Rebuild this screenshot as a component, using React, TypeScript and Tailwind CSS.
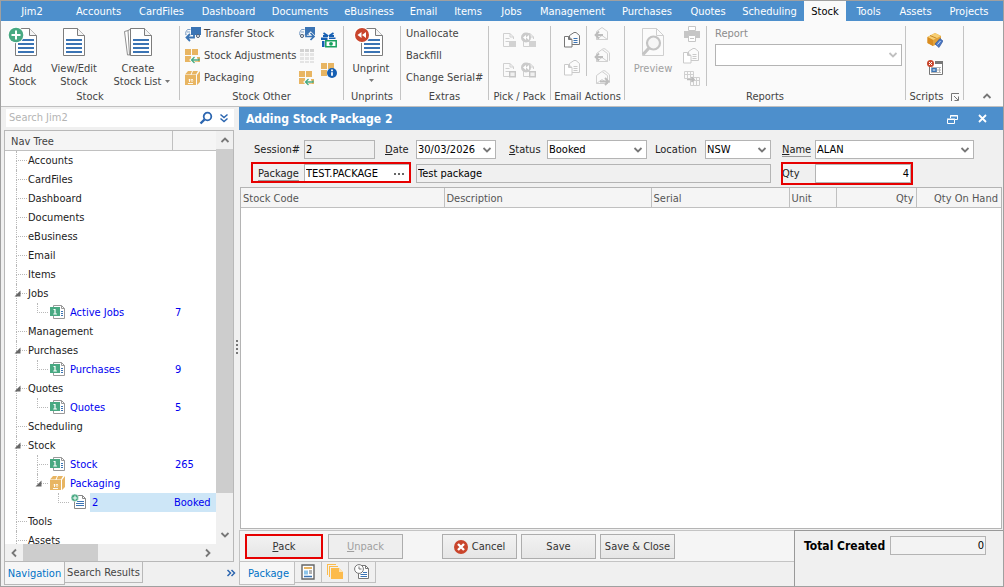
import type { ReactNode } from "react";
import clsx from "clsx";

const MENU = [
  { label: "Jim2", width: "w-[66px] pr-1" },
  { label: "Accounts", width: "w-[63px]" },
  { label: "CardFiles", width: "w-[63px]" },
  { label: "Dashboard", width: "w-[71px]" },
  { label: "Documents", width: "w-[72px]" },
  { label: "eBusiness", width: "w-[66px]" },
  { label: "Email", width: "w-[43px]" },
  { label: "Items", width: "w-[46px]" },
  { label: "Jobs", width: "w-[41px]" },
  { label: "Management", width: "w-[81px]" },
  { label: "Purchases", width: "w-[68px]" },
  { label: "Quotes", width: "w-[54px]" },
  { label: "Scheduling", width: "w-[69px]" },
  { label: "Stock", width: "w-[42px]", active: true },
  { label: "Tools", width: "w-[45px]" },
  { label: "Assets", width: "w-[49px]" },
  { label: "Projects", width: "w-[58px]" },
];

type TreeNode = {
  label: string;
  level: 0 | 1 | 2;
  value?: string;
  icon?: "list" | "box" | "new";
  open?: boolean;
  more?: boolean;
  selected?: boolean;
};

const TREE: TreeNode[] = [
  { label: "Accounts", level: 0 },
  { label: "CardFiles", level: 0 },
  { label: "Dashboard", level: 0 },
  { label: "Documents", level: 0 },
  { label: "eBusiness", level: 0 },
  { label: "Email", level: 0 },
  { label: "Items", level: 0 },
  { label: "Jobs", level: 0, open: true },
  { label: "Active Jobs", level: 1, value: "7", icon: "list" },
  { label: "Management", level: 0 },
  { label: "Purchases", level: 0, open: true },
  { label: "Purchases", level: 1, value: "9", icon: "list" },
  { label: "Quotes", level: 0, open: true },
  { label: "Quotes", level: 1, value: "5", icon: "list" },
  { label: "Scheduling", level: 0 },
  { label: "Stock", level: 0, open: true },
  { label: "Stock", level: 1, value: "265", icon: "list", more: true },
  { label: "Packaging", level: 1, icon: "box", open: true },
  { label: "2", level: 2, value: "Booked", icon: "new", selected: true },
  { label: "Tools", level: 0 },
  { label: "Assets", level: 0 },
];

/* ---------- icons ---------- */

function Chevron({ dir = "down", className }: { dir?: "down" | "up" | "left" | "right"; className?: string }) {
  const d = {
    down: "M1.5 3 5 6.5 8.5 3",
    up: "M1.5 7 5 3.5 8.5 7",
    left: "M7 1.5 3.5 5 7 8.5",
    right: "M3 1.5 6.5 5 3 8.5",
  }[dir];
  return (
    <svg viewBox="0 0 10 10" className={clsx("size-[10px] shrink-0", className)} fill="none" stroke="currentColor" strokeWidth="1.8">
      <path d={d} />
    </svg>
  );
}

function Caret() {
  return (
    <svg viewBox="0 0 5 3" className="h-[3px] w-[5px] shrink-0" fill="#777">
      <path d="M0 0h5L2.500 3z" />
    </svg>
  );
}

function BigDoc({ kind }: { kind: "add" | "plain" | "list" | "unprint" }) {
  const blue = "#3b74b4";
  const view = {
    add: { box: "0 0 30 30", size: "w-[30px]" },
    plain: { box: "6 0 24 30", size: "w-6" },
    list: { box: "0 0 30 30", size: "w-[30px]" },
    unprint: { box: "0 0 34 30", size: "w-[34px]" },
  }[kind];
  return (
    <svg viewBox={view.box} className={clsx("h-[30px]", view.size)} fill="none">
      {kind === "list" && (
        <g stroke="#8f8f8f" fill="#fff">
          <path d="M1.500 4.500 9 2.500v25l-4.500.5z" />
          <path d="M5 3.500 9 1.500v26l-2.500.5z" />
        </g>
      )}
      <path d="M7.500 1.500h14l7 7v20h-21z" fill="#fff" stroke="#7d7d7d" />
      <path d="M21.500 1.500v7h7" fill="#f4f4f4" stroke="#7d7d7d" />
      <path d="M10 13h16M10 17h16M10 21h16M10 25h16" stroke={blue} strokeWidth="2" />
      {kind === "add" && (
        <g>
          <circle cx="8" cy="8" r="8.300" fill="#fff" />
          <circle cx="8" cy="8" r="7.300" fill="#48a982" />
          <path d="M8 3.500v9M3.500 8h9" stroke="#fff" strokeWidth="2" />
        </g>
      )}
      {kind === "unprint" && (
        <g>
          <circle cx="8" cy="8" r="8" fill="#fff" />
          <circle cx="8" cy="8" r="7" fill="#c9452c" />
          <path d="M7.500 5v6L3.500 8zM12 5v6L8 8z" fill="#fff" />
        </g>
      )}
    </svg>
  );
}

function PreviewIcon() {
  return (
    <svg viewBox="0 0 24 30" className="h-[30px] w-[24px]" fill="none">
      <path d="M1.500 1.500h14l7 7v20h-21z" fill="#fbfbfb" stroke="#cfcfcf" />
      <path d="M15.500 1.500v7h7" stroke="#cfcfcf" />
      <circle cx="12.500" cy="16" r="6.500" stroke="#c4c4c4" strokeWidth="2.200" fill="#f6f6f6" />
      <path d="M8 21 2 27.500" stroke="#c4c4c4" strokeWidth="3.200" />
    </svg>
  );
}

function TruckIcon({ dir }: { dir: "in" | "out" }) {
  return (
    <svg viewBox="0 0 16 16" className="size-4 shrink-0" fill="none">
      <path d="M6 1h10v8H6z" fill="#3b74b4" />
      <path d="M5.500 3.500h-3L.8 6v3h4.700M2 6h3" stroke="#7d9fc5" />
      {dir === "in" ? (
        <g>
          <circle cx="13" cy="10" r="1.500" fill="#fff" stroke="#4a5a70" />
          <path d="M1 11.500h8M5 7.500 1 11.500l4 4" stroke="#fafafa" strokeWidth="3" />
          <path d="M1.500 11.500H9V9M5 8 1.500 11.500 5 15" stroke="#3b74b4" strokeWidth="1.800" />
        </g>
      ) : (
        <g>
          <circle cx="3" cy="10" r="1.500" fill="#fff" stroke="#4a5a70" />
          <path d="M7 10.500h7M10.500 6.500l4 4-4 4" stroke="#fafafa" strokeWidth="3.500" />
          <path d="M7 8v2.500h8M11.500 7l3.500 3.500-3.500 3.500" stroke="#3b74b4" strokeWidth="1.700" />
        </g>
      )}
    </svg>
  );
}

function TilesIcon({ badge }: { badge: "arrow" | "info" }) {
  return (
    <svg viewBox="0 0 16 16" className="size-4 shrink-0" fill="none">
      <path d="M0 1h6v6H0zM7 1h6v6H7zM0 8h6v6H0z" fill="#e8b562" />
      {badge === "arrow" ? (
        <g>
          <path d="M12 9h3v5H7v-1h5z" fill="#e8b562" />
          <path d="M6 12h7M9.500 8.500 6 12l3.500 3.500" stroke="#fff" strokeWidth="2.600" />
          <path d="M6.500 12H14v-1.500M9.500 9l-3 3 3 3" stroke="#48a982" strokeWidth="1.300" />
        </g>
      ) : (
        <g>
          <circle cx="11" cy="11" r="5" fill="#165fb3" />
          <path d="M11 7.500v1.700M11 10.200v3.600" stroke="#fff" strokeWidth="1.800" />
        </g>
      )}
    </svg>
  );
}

function BoxIcon() {
  return (
    <svg viewBox="0 0 16 16" className="size-4 shrink-0">
      <path d="M0 4.500 3 1h4L5.500 4.500zM6.500 4.500 8 1h5l-2 3.500z" fill="#e8b562" />
      <path d="M0 5h11v10H0zM12 5l3-4v11l-3 3z" fill="#e8b562" />
      <path d="M3 13.500h5M4.500 9v3M7 9v3M3.500 10.200l1-1 1 1M6 10.200l1-1 1 1" stroke="#fff" strokeWidth=".9" fill="none" />
    </svg>
  );
}

function GridIcon() {
  return (
    <svg viewBox="0 0 16 16" className="size-4">
      <path d="M1 1h4v3H1zM6 1h4v3H6zM11 1h4v3h-4z" fill="#d2d2d2" />
      <path d="M1 5h4v3H1zM6 5h4v3H6zM11 5h4v3h-4zM1 9h4v3H1zM6 9h4v3H6zM11 9h4v3h-4zM1 13h4v2H1zM6 13h4v2H6zM11 13h4v2h-4z" fill="#e4e4e4" />
    </svg>
  );
}

function GiftIcon() {
  return (
    <svg viewBox="0 0 16 16" className="size-4" fill="none">
      <path d="M7 4 2.500 1M7 4 2 4M8 4l4.500-3M8 4h5" stroke="#165fb3" strokeWidth="1.800" />
      <path d="M0 5.500h6.500V8H0zM8 5.500h6.500V7H8zM1 9h2.500v6H1z" fill="#165fb3" />
      <path d="M4.800 8.800h10.400v6H4.800z" fill="#fff" stroke="#18a05e" strokeWidth="1.500" />
      <circle cx="10" cy="11.800" r="1.900" fill="#18a05e" />
    </svg>
  );
}

function PickIcon({ back, hollow }: { back?: boolean; hollow?: boolean }) {
  return (
    <svg viewBox="0 0 16 16" className="size-4" fill="none" stroke="#d0d0d0">
      <path d="M8 14.500H2.500V1.500H9L12.500 5v2M9 1.500V5h3.500M4.500 6.500h4M4.500 9.500h4" />
      {hollow ? <path d="M8.700 9.700h5.600v5H8.700z" fill="#f0f0f0" stroke="#c6c6c6" strokeWidth="1.400" /> : <path d="M8 9h7v6H8z" fill="#d2d2d2" stroke="none" />}
      {back && (
        <g stroke="none">
          <circle cx="5" cy="5.500" r="5" fill="#cbcbcb" />
          <path d="M5 3v5L2 5.500zM8 3v5L5 5.500z" fill="#fff" />
        </g>
      )}
    </svg>
  );
}

function PagesIcon({ tone }: { tone: "light" | "blueText" }) {
  const line = tone === "light" ? "#cacaca" : "#777";
  const text = tone === "blueText" ? "#3b74b4" : line;
  return (
    <svg viewBox="0 0 18 16" className="h-4 w-[18px]" fill="#fbfbfb" stroke={line}>
      <path d="M6.500 12V3.500l4.500-3h2l3.500 3v9h-8z" />
      <path d="M10.500 6.500h4M10.500 8.500h4M10.500 10.500h4" stroke={text} />
      <path d="M1.500 4.500h4l3.500 3v7.500H1.500zM5.500 4.500v3H9" fill="#fff" />
    </svg>
  );
}

function MailIcon({ dir, stack }: { dir: "left" | "right"; stack?: boolean }) {
  return (
    <svg viewBox="0 0 16 16" className="size-4" fill="none" stroke="#d0d0d0">
      <path d="M2.500 13.500v-8l5.500-4 5.500 4v8z" fill="#fafafa" />
      <path d="M2.500 13.500 8 9.500l5.500 4" />
      {stack && <path d="M8.500.8h2.500l4.500 4v8" />}
      {dir === "left" ? (
        <path d="M1.500 9H9M5 5.500 1.500 9 5 12.500" stroke="#bdbdbd" strokeWidth="1.800" />
      ) : (
        <path d="M6 11.500h8.500M11 8l3.500 3.500L11 15" stroke="#bdbdbd" strokeWidth="1.800" />
      )}
    </svg>
  );
}

function PrinterIcon() {
  return (
    <svg viewBox="0 0 16 16" className="size-4" fill="none">
      <path d="M4.500.5h7v4h-7z" stroke="#c6c6c6" fill="#fff" />
      <path d="M0 5h16v7H0z" fill="#c6c6c6" />
      <path d="M4.500 9.500h7v6h-7z" fill="#fff" stroke="#c6c6c6" />
      <path d="M6 12.500h4" stroke="#c6c6c6" />
    </svg>
  );
}

function GridCopyIcon() {
  return (
    <svg viewBox="0 0 16 16" className="size-4" fill="none" stroke="#d0d0d0">
      <path d="M.5 1.500h9v7h-9zM.5 4.500h9M3.500 1.500v7M6.500 1.500v7M6.500 7.500h9v8h-9zM6.500 10.500h9M9.500 7.500v8M12.500 7.500v8" />
      <path d="M3 9.500h7M7.500 7l2.500 2.500L7.500 12" stroke="#bbb" strokeWidth="1.600" />
    </svg>
  );
}

function ScriptBoxIcon() {
  return (
    <svg viewBox="0 0 16 16" className="size-4">
      <path d="M.5 5 8 1l6 3v6l-8 4-5.500-3z" fill="#e3a23a" />
      <path d="M.5 5 8 1l6 3-8 4z" fill="#f7cf74" />
      <path d="M6 8v6l-5.500-3V5z" fill="#d98c20" />
      <path d="M3 3.500 9.500 6.300" stroke="#c98a2a" />
      <path d="M8 12l5-5.500 3 2.500-4 6.500z" fill="#4a78c4" stroke="#2c4f93" strokeWidth=".6" />
      <path d="M10.500 12.500l3-3.500" stroke="#cfe0f8" />
    </svg>
  );
}

function ScriptTimeIcon() {
  return (
    <svg viewBox="0 0 16 16" className="size-4" fill="none">
      <path d="M2.500 5v9.500h13V3" fill="#fff" stroke="#777" />
      <path d="M8 1h8v3H8z" fill="#777" />
      <path d="M4 7.500h10M4 10h10M4 12.500h10M6.500 7v6M9.500 7v6M12.500 7v6" stroke="#b4b4b4" />
      <path d="M5 8.700h4v2.600H5z" fill="#fff" stroke="#3b74b4" strokeWidth="1.400" />
      <circle cx="3.500" cy="3.500" r="3.500" fill="#c9452c" />
      <path d="M2 2l3 3M5 2 2 5" stroke="#fff" />
    </svg>
  );
}

function ListIcon() {
  return (
    <svg viewBox="0 0 16 16" className="size-4 shrink-0" fill="none">
      <path d="M3.500 1.500h8l3 3v10h-11z" fill="#fff" stroke="#999" />
      <path d="M11.500 1.500v3h3" stroke="#999" />
      <path d="M11 7.500h2M11 9.500h2M11 11.500h2" stroke="#3b74b4" />
      <path d="M0 3h10v9H0z" fill="#48a982" />
      <path d="M3.500 5.500H5v4.500M3.300 10h3.600" stroke="#fff" strokeWidth="1.200" />
    </svg>
  );
}

function NewDocIcon() {
  return (
    <svg viewBox="0 0 16 16" className="size-4 shrink-0" fill="none">
      <path d="M3.500 1.500h8l3 3v10h-11z" fill="#fff" stroke="#888" />
      <path d="M11.500 1.500v3h3" stroke="#888" />
      <path d="M6 7.500h7M5 9.500h8M5 11.500h8" stroke="#3b74b4" />
      <circle cx="3.800" cy="3.800" r="3.800" fill="#48a982" stroke="#fff" strokeWidth=".6" />
      <path d="M4 1.700v4.600M1.700 4h4.600" stroke="#fff" />
    </svg>
  );
}

/* ---------- ribbon ---------- */

function RibbonGroup({ title, className, children, extra }: { title: string; className: string; children: ReactNode; extra?: ReactNode }) {
  return (
    <section aria-label={title} className={clsx("mt-[5px] mb-1.5 flex shrink-0 flex-col border-r border-[#c4c4c4]", className)}>
      <div className="flex h-[62px] shrink-0 items-start">{children}</div>
      <div className="flex h-[13px] shrink-0 items-center justify-center gap-2 whitespace-nowrap pt-1">
        {title}
        {extra}
      </div>
    </section>
  );
}

function IconButton({ label, children }: { label: string; children: ReactNode }) {
  return (
    <button type="button" aria-label={label} className="flex items-center justify-center">
      {children}
    </button>
  );
}

function BigButton({ icon, className, children }: { icon: ReactNode; className?: string; children: ReactNode }) {
  return (
    <button type="button" className={clsx("flex flex-col items-center gap-[5px] whitespace-nowrap pt-px leading-[13px]", className)}>
      {icon}
      <span className="flex flex-col items-center">{children}</span>
    </button>
  );
}

function Ribbon() {
  return (
    <div className="flex h-[86px] shrink-0 border-b border-[#c0c0c0] bg-[#fafafa] text-[#444]">
      <RibbonGroup title="Stock" className="w-[179px]">
        <BigButton icon={<BigDoc kind="add" />} className="w-[43px]">
          <span>Add</span>
          <span>Stock</span>
        </BigButton>
        <BigButton icon={<BigDoc kind="plain" />} className="w-[60px]">
          <span>View/Edit</span>
          <span>Stock</span>
        </BigButton>
        <BigButton icon={<BigDoc kind="list" />} className="w-[68px]">
          <span>Create</span>
          <span className="flex items-center gap-1 pl-2">
            Stock List <Caret />
          </span>
        </BigButton>
      </RibbonGroup>

      <RibbonGroup title="Stock Other" className="w-[164px]">
        <div className="flex w-[119px] flex-col gap-1.5 whitespace-nowrap pl-[5px]">
          <button type="button" className="flex h-4 items-center gap-[3px]">
            <TruckIcon dir="in" /> Transfer Stock
          </button>
          <button type="button" className="flex h-4 items-center gap-[3px]">
            <TilesIcon badge="arrow" /> Stock Adjustments
          </button>
          <button type="button" className="flex h-4 items-center gap-[3px]">
            <BoxIcon /> Packaging
          </button>
        </div>
        <div className="flex w-[22px] flex-col items-start gap-1.5">
          <IconButton label="Transfer out"><TruckIcon dir="out" /></IconButton>
          <IconButton label="Stock grid"><GridIcon /></IconButton>
          <IconButton label="Return stock"><TilesIcon badge="arrow" /></IconButton>
        </div>
        <div className="flex flex-col gap-[14px] pt-1.5">
          <IconButton label="Gift vouchers"><GiftIcon /></IconButton>
          <IconButton label="Stock information"><TilesIcon badge="info" /></IconButton>
        </div>
      </RibbonGroup>

      <RibbonGroup title="Unprints" className="w-[57px]">
        <BigButton icon={<BigDoc kind="unprint" />} className="w-[54px]">
          <span>Unprint</span>
          <span className="pt-1"><Caret /></span>
        </BigButton>
      </RibbonGroup>

      <RibbonGroup title="Extras" className="w-[88px]">
        <div className="flex flex-col items-start gap-1.5 whitespace-nowrap pl-[5px]">
          <button type="button" className="h-4">Unallocate</button>
          <button type="button" className="h-4">Backfill</button>
          <button type="button" className="h-4">Change Serial#</button>
        </div>
      </RibbonGroup>

      <RibbonGroup title="Pick / Pack" className="w-[62px]">
        <div className="grid grid-cols-2 gap-x-1 gap-y-[14px] pl-3 pt-1.5">
          <IconButton label="Pick"><PickIcon /></IconButton>
          <IconButton label="Unpick"><PickIcon back /></IconButton>
          <IconButton label="Pack slip"><PickIcon hollow /></IconButton>
          <IconButton label="Unpack slip"><PickIcon back hollow /></IconButton>
        </div>
      </RibbonGroup>

      <RibbonGroup title="Email Actions" className="w-[74px]">
        <div className="flex w-9 flex-col items-center gap-3 border-r border-[#c4c4c4] pr-1.5 pl-3 pt-1.5">
          <IconButton label="Email document"><PagesIcon tone="blueText" /></IconButton>
          <IconButton label="Email list"><PagesIcon tone="light" /></IconButton>
        </div>
        <div className="flex flex-col gap-1.5 pl-[7px]">
          <IconButton label="Reply"><MailIcon dir="left" /></IconButton>
          <IconButton label="Reply all"><MailIcon dir="left" stack /></IconButton>
          <IconButton label="Forward"><MailIcon dir="right" stack /></IconButton>
        </div>
      </RibbonGroup>

      <RibbonGroup title="Reports" className="min-w-[281px]">
        <BigButton icon={<PreviewIcon />} className="w-14 text-[#a0a0a0]">
          Preview
        </BigButton>
        <div className="flex w-[26px] flex-col items-end gap-1.5 border-r border-[#c4c4c4] pr-1.5">
          <IconButton label="Print"><PrinterIcon /></IconButton>
          <IconButton label="Copy report"><PagesIcon tone="light" /></IconButton>
          <IconButton label="Export grid"><GridCopyIcon /></IconButton>
        </div>
        <div className="flex grow flex-col pl-2 pr-[3px] text-[#8c8c8c]">
          <label htmlFor="report" className="h-[18px] leading-[15px]">Report</label>
          <div className="relative">
            <select id="report" className="h-[22px] w-full appearance-none border border-[#b4b4b4] bg-white px-1">
              <option></option>
            </select>
            <Chevron className="pointer-events-none absolute right-1 top-1.5 text-[#c0c0c0]" />
          </div>
        </div>
      </RibbonGroup>

      <RibbonGroup
        title="Scripts"
        className="w-[58px]"
        extra={
          <svg viewBox="0 0 8 8" className="size-2" fill="none" stroke="#777">
            <path d="M.5 8V.5H8M3 3l4 4M7.500 3.500v4h-4" />
          </svg>
        }
      >
        <div className="flex w-full flex-col items-center gap-3 pt-1.5">
          <IconButton label="Run script"><ScriptBoxIcon /></IconButton>
          <IconButton label="Scheduled scripts"><ScriptTimeIcon /></IconButton>
        </div>
      </RibbonGroup>

      <button type="button" aria-label="Collapse ribbon" className="ml-auto mr-[11px] mb-[5px] self-end text-[#777]">
        <Chevron dir="up" />
      </button>
    </div>
  );
}

/* ---------- navigation ---------- */

const NODE_ICONS = { list: <ListIcon />, box: <BoxIcon />, new: <NewDocIcon /> };

function Elbow({ open, through }: { open?: boolean; through?: boolean }) {
  return (
    <span className="relative flex w-[11px] shrink-0 flex-col self-stretch">
      <span className="h-[10px] border-b border-l border-dotted border-[#b8b8b8]" />
      {through && <span className="grow border-l border-dotted border-[#b8b8b8]" />}
      {open && (
        <button type="button" aria-label="Collapse" className="absolute -left-[2px] top-[6px]">
          <svg viewBox="0 0 7 7" className="size-[7px]" fill="#666">
            <path d="M6.500.5v6h-6z" />
          </svg>
        </button>
      )}
    </span>
  );
}

function TreeRow({ node }: { node: TreeNode }) {
  return (
    <li role="treeitem" aria-selected={!!node.selected} className="flex h-[19px] shrink-0 items-center whitespace-nowrap">
      <span className="flex w-[167px] shrink-0 items-center self-stretch pl-[11px]">
        {node.level === 0 ? (
          <Elbow open={node.open} through />
        ) : (
          <span className={clsx("shrink-0 self-stretch border-l border-dotted border-[#b8b8b8]", node.level === 1 ? "w-[21px]" : "w-[42px]")} />
        )}
        {node.level > 0 && <Elbow open={node.open} through={node.more} />}
        {node.icon && <span className="ml-[2px]">{NODE_ICONS[node.icon]}</span>}
        <span
          className={clsx(
            "flex grow items-center self-stretch pt-[2px]",
            node.level === 0 ? "text-[#222]" : "text-[#0000f0]",
            node.level === 0 ? "pl-px" : node.selected ? "ml-[3px] bg-[#cde6f7] pl-[2px]" : "pl-1",
          )}
        >
          {node.label}
        </span>
      </span>
      <span className={clsx("flex grow items-center self-stretch pt-[2px] text-[#0000f0]", node.selected ? "bg-[#cde6f7] pl-[2px]" : "pl-[3px]")}>
        {node.value}
      </span>
    </li>
  );
}

function Sidebar() {
  return (
    <aside className="flex w-[233px] shrink-0 flex-col pl-[3px]">
      <div className="mt-[2px] mb-[3px] ml-[2px] flex h-[18px] items-center bg-white pr-[5px]">
        <input aria-label="Search Jim2" placeholder="Search Jim2" className="min-w-0 grow bg-transparent pl-[3px] pt-px outline-none placeholder:text-[#b4b4b4]" />
        <button type="button" aria-label="Search">
          <svg viewBox="0 0 14 14" className="size-[14px]" fill="none" stroke="#2c66b0">
            <circle cx="8.500" cy="5.500" r="3.800" strokeWidth="1.800" />
            <path d="M5.500 8.500 1.500 12.500" strokeWidth="2.400" />
          </svg>
        </button>
        <button type="button" aria-label="More search options" className="ml-1.5">
          <svg viewBox="0 0 10 10" className="size-[10px]" fill="none" stroke="#2c66b0" strokeWidth="1.500">
            <path d="M1.500 1.500 5 4.500l3.500-3M1.500 5.500 5 8.500l3.500-3" />
          </svg>
        </button>
      </div>

      <div className="flex min-h-0 grow flex-col border border-[#b8b8b8] bg-white">
        <div className="flex min-h-0 grow">
          <div className="flex min-h-0 min-w-0 grow flex-col overflow-hidden">
            <div className="flex h-5 shrink-0 items-center border-b border-[#c0c0c0] bg-[#f5f5f5] text-[#444]">
              <span className="flex h-full w-[168px] items-center border-r border-[#c0c0c0] pl-1.5 pt-1">Nav Tree</span>
            </div>
            <ul role="tree" className="flex min-h-0 grow flex-col overflow-hidden">
              {TREE.map((node, i) => (
                <TreeRow key={i} node={node} />
              ))}
            </ul>
          </div>
          <div className="flex w-[17px] shrink-0 flex-col items-center bg-[#f0f0f0] text-[#777]">
            <span className="flex h-[18px] items-center"><Chevron dir="up" /></span>
            <span className="w-full grow bg-[#cdcdcd]" />
            <span className="flex h-[51px] items-end pb-1"><Chevron /></span>
          </div>
        </div>
        <div className="flex h-[17px] shrink-0 items-center bg-[#f0f0f0] text-[#777]">
          <span className="flex w-[18px] justify-center"><Chevron dir="left" /></span>
          <span className="h-full w-[75px] bg-[#cdcdcd]" />
          <span className="ml-auto mr-5"><Chevron dir="right" /></span>
        </div>
      </div>

      <div className="flex h-[24px] shrink-0 items-start whitespace-nowrap">
        <button type="button" className="h-[23px] w-[61px] border border-t-0 border-[#b8b8b8] bg-[#f6f6f6] pt-px text-[#0072c6]">Navigation</button>
        <button type="button" className="h-[21px] w-[78px] border border-l-0 border-t-0 border-[#b8b8b8] bg-[#f0f0f0] pt-px text-[#444]">Search Results</button>
        <button type="button" aria-label="More tabs" className="-mr-[2px] ml-auto mt-1.5">
          <svg viewBox="0 0 10 10" className="size-[10px]" fill="none" stroke="#2c66b0" strokeWidth="1.500">
            <path d="M1.500 2 4.500 5l-3 3M5.500 2l3 3-3 3" />
          </svg>
        </button>
      </div>
    </aside>
  );
}

/* ---------- stock package form ---------- */

function Combo({ id, value, className }: { id: string; value: string; className: string }) {
  return (
    <div className={clsx("relative", className)}>
      <select id={id} className="h-[19px] w-full appearance-none border border-[#b4b4b4] bg-white pl-px text-black">
        <option>{value}</option>
      </select>
      <Chevron className="pointer-events-none absolute right-1 top-[5px] text-[#777]" />
    </div>
  );
}

const FIELD = "h-[19px] border border-[#b4b4b4] pl-px text-black outline-none";

function PackageForm() {
  return (
    <form className="flex shrink-0 flex-col gap-[5px] whitespace-nowrap px-[13px] pb-1 pt-[10px] text-[#222]">
      <div className="flex items-center">
        <label htmlFor="session" className="w-[52px] pl-[2px]">Session#</label>
        <input id="session" readOnly defaultValue="2" className={clsx(FIELD, "w-[71px] bg-[#f0f0f0]")} />
        <label htmlFor="date" className="w-[41px] pl-[10px]"><u>D</u>ate</label>
        <div className="relative w-[80px]">
          <input id="date" defaultValue="30/03/2026" className={clsx(FIELD, "w-full bg-white")} />
          <button type="button" aria-label="Pick date" className="absolute right-1 top-[5px] text-[#777]"><Chevron /></button>
        </div>
        <label htmlFor="status" className="w-[51px] pl-[13px]"><u>S</u>tatus</label>
        <Combo id="status" value="Booked" className="w-[100px]" />
        <label htmlFor="location" className="w-[58px] pl-2">Location</label>
        <Combo id="location" value="NSW" className="w-[66px]" />
        <label htmlFor="name" className="w-11 pl-[11px]"><span className="border-b border-[#999]"><u>N</u>ame</span></label>
        <Combo id="name" value="ALAN" className="w-[159px]" />
      </div>
      <div className="flex items-center">
        <div className="relative flex items-center">
          <label htmlFor="package" className="w-[52px] pl-[6px]"><span className="border-b border-[#999]">Package</span></label>
          <input id="package" defaultValue="TEST.PACKAGE" className={clsx(FIELD, "w-[106px] bg-white pr-5")} />
          <button type="button" aria-label="Browse packages" className="absolute right-1.5 flex gap-[2px]">
            <span className="size-[2px] bg-[#666]" />
            <span className="size-[2px] bg-[#666]" />
            <span className="size-[2px] bg-[#666]" />
          </button>
          <span className="pointer-events-none absolute -top-[2px] -right-px bottom-0 -left-px border-2 border-[#e60000]" />
        </div>
        <input aria-label="Package description" readOnly defaultValue="Test package" className={clsx(FIELD, "ml-1.5 w-[355px] bg-[#f0f0f0]")} />
        <div className="relative flex items-center">
          <label htmlFor="qty" className="w-11 pl-[11px]">Qty</label>
          <input id="qty" defaultValue="4" className={clsx(FIELD, "w-[96px] bg-white pr-px text-right")} />
          <span className="pointer-events-none absolute -inset-y-[2px] -right-[2px] left-[10px] border-2 border-[#e60000]" />
        </div>
      </div>
    </form>
  );
}

function StockGrid() {
  return (
    <div className="ml-px mr-px flex min-h-0 grow flex-col border border-[#b4b4b4] bg-white">
      <table className="w-full table-fixed text-left text-[#555]">
        <thead>
          <tr className="h-[19px] border-b border-[#c0c0c0] bg-[#f5f5f5]">
            <th className="w-[203px] border-r border-[#c0c0c0] px-[2px] pt-[3px] font-normal">Stock Code</th>
            <th className="w-[207px] border-r border-[#c0c0c0] px-[2px] pt-[3px] font-normal">Description</th>
            <th className="w-[138px] border-r border-[#c0c0c0] px-[2px] pt-[3px] font-normal">Serial</th>
            <th className="w-[47px] border-r border-[#c0c0c0] px-[2px] pt-[3px] font-normal">Unit</th>
            <th className="w-[80px] border-r border-[#c0c0c0] px-[2px] pt-[3px] text-right font-normal">Qty</th>
            <th className="px-[3px] pt-[3px] text-right font-normal">Qty On Hand</th>
          </tr>
        </thead>
        <tbody />
      </table>
    </div>
  );
}

const BUTTON = "flex h-[25px] w-[75px] items-center justify-center border border-[#adadad] bg-linear-to-b from-[#f2f2f2] to-[#e6e6e6] pt-px text-[#333]";
const TAB = "flex h-[21px] w-[27px] items-center justify-center border-r border-b border-[#c0c0c0]";

function PackageFooter() {
  return (
    <footer className="mt-px flex h-[56px] shrink-0 whitespace-nowrap">
      <div className="flex grow flex-col">
        <div className="flex h-8 items-center border-b border-l border-t border-[#c4c4c4] bg-[#f5f5f5] pl-[5px]">
          <button type="button" className="flex h-[25px] w-[78px] items-center justify-center border-2 border-[#e60000] bg-linear-to-b from-[#f2f2f2] to-[#e6e6e6] pt-px text-[#333]">
            <u>P</u>ack
          </button>
          <button type="button" disabled className="ml-[5px] flex h-[25px] w-[75px] items-center justify-center border border-[#adadad] bg-[#eeeeee] pt-px text-[#a0a0a0]">
            <u>U</u>npack
          </button>
          <div className="ml-[39px] flex gap-1">
            <button type="button" className={clsx(BUTTON, "gap-1")}>
              <svg viewBox="0 0 14 14" className="size-[14px]">
                <circle cx="7" cy="7" r="7" fill="#c9452c" />
                <path d="M4 4l6 6M10 4l-6 6" stroke="#fff" strokeWidth="2.400" />
              </svg>
              Cancel
            </button>
            <button type="button" className={BUTTON}>Save</button>
            <button type="button" className={BUTTON}>Save &amp; Close</button>
          </div>
        </div>
        <div className="flex items-start">
          <button type="button" className="h-[23px] w-14 border-x border-b border-[#c0c0c0] bg-[#f6f6f6] pl-[3px] pt-px text-[#0072c6]">Package</button>
          <button type="button" aria-label="Details" className={TAB}>
            <svg viewBox="0 0 14 16" className="h-4 w-[14px]" fill="none">
              <path d="M1 1h12v14H1z" fill="#fff" stroke="#666" strokeWidth="1.400" />
              <path d="M3 3h8v2H3z" fill="#e8b562" />
              <path d="M3 6.500h4v4H3z" fill="#8cc4ea" />
              <path d="M8 7h3M8 9h3" stroke="#666" />
              <path d="M3 12.500h8" stroke="#3b74b4" strokeWidth="1.500" />
            </svg>
          </button>
          <button type="button" aria-label="Documents" className={TAB}>
            <svg viewBox="0 0 16 16" className="size-4" fill="#fcbb4c">
              <path d="M0 0h9v1H1v10H0zM2 2h9v1H3v10H2zM4 4h8l4 4v7H4z" />
              <path d="M12 4v4h4z" fill="#fde3b4" />
            </svg>
          </button>
          <button type="button" aria-label="History" className={TAB}>
            <svg viewBox="0 0 16 16" className="size-4" fill="none" stroke="#777">
              <path d="M4.500 9v5.500h10V4.500l-3-3H8M11.500 1.500v3h3" fill="#fff" />
              <path d="M9 8.500h4M6.500 10.500H13M6.500 12.500H13" stroke="#3b74b4" />
              <circle cx="5" cy="5" r="4.400" fill="#fff" />
              <path d="M5 2.500V5h2.500" />
            </svg>
          </button>
        </div>
      </div>
      <div className="flex w-[209px] items-start border-l border-t border-[#999] pt-[5px] pl-[9px]">
        <label htmlFor="total" className="w-[86px] pt-[3px] text-[12px] leading-[14px] font-bold text-black">Total Created</label>
        <input id="total" readOnly defaultValue="0" className={clsx(FIELD, "w-24 bg-[#f3f3f3] pr-px text-right")} />
      </div>
    </footer>
  );
}

export default function App() {
  return (
    <div className="flex h-screen flex-col overflow-hidden border border-[#a0a0a0] bg-[#f0f0f0] font-['DejaVu_Sans_Condensed','DejaVu_Sans',sans-serif] text-[11px] leading-[14px]">
      <nav className="flex h-5 shrink-0 bg-[#4d8fcc] text-white">
        {MENU.map((item) => (
          <a
            key={item.label}
            href="#"
            className={clsx("flex shrink-0 items-center justify-center whitespace-nowrap pt-[2px]", item.width, item.active && "bg-[#fafafa] text-black")}
          >
            {item.label}
          </a>
        ))}
      </nav>
      <Ribbon />
      <div className="flex min-h-0 grow">
        <Sidebar />
        <div className="flex w-[5px] shrink-0 flex-col items-center justify-center gap-[2px]">
          <span className="size-[2px] bg-[#777]" />
          <span className="size-[2px] bg-[#777]" />
          <span className="size-[2px] bg-[#777]" />
          <span className="size-[2px] bg-[#777]" />
        </div>
        <main className="flex min-w-0 grow flex-col">
          <header className="flex h-[23px] shrink-0 items-center bg-[#4d8fcc] pl-[7px] pr-4 text-white">
            <h1 className="text-[12px] font-bold">Adding Stock Package 2</h1>
            <button type="button" aria-label="Restore window" className="ml-auto">
              <svg viewBox="0 0 11 10" className="h-[10px] w-[11px]" fill="none" stroke="#fff">
                <path d="M3.500 4V1.500h7v4H8M3 2h8M.5 5.500h7v4h-7zM0 5h8" />
              </svg>
            </button>
            <button type="button" aria-label="Close" className="ml-5">
              <svg viewBox="0 0 9 9" className="size-[9px]" fill="none" stroke="#fff" strokeWidth="1.800">
                <path d="M1 1l7 7M8 1 1 8" />
              </svg>
            </button>
          </header>
          <PackageForm />
          <StockGrid />
          <PackageFooter />
        </main>
      </div>
    </div>
  );
}
